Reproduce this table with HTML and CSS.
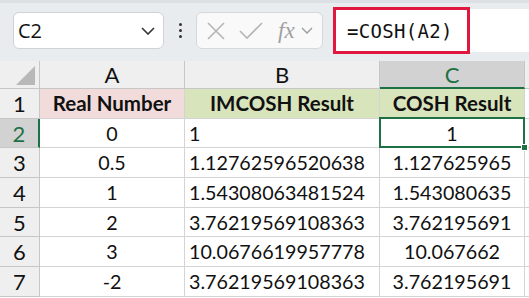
FILE: index.html
```html
<!DOCTYPE html>
<html>
<head>
<meta charset="utf-8">
<link rel="stylesheet" href="styles.css">
</head>
<body>
<div class="app">
  <div class="toolbar">
    <div class="namebox">
      <span class="name">C2</span>
      <svg class="chev" width="14" height="8" viewBox="0 0 14 8"><path d="M1 1 L7 7 L13 1" fill="none" stroke="#333" stroke-width="1.6"/></svg>
    </div>
    <div class="dots"><i></i><i></i><i></i></div>
    <div class="fxbox">
      <svg width="20" height="20" viewBox="0 0 20 20"><path d="M2 2 L18 18 M18 2 L2 18" stroke="#b5b5b5" stroke-width="1.6"/></svg>
      <svg width="24" height="18" viewBox="0 0 24 18"><path d="M1 9 L8 16 L23 1" fill="none" stroke="#b5b5b5" stroke-width="1.6"/></svg>
      <span class="fx">fx</span>
      <svg width="12" height="7" viewBox="0 0 12 7"><path d="M1 1 L6 6 L11 1" fill="none" stroke="#9a9a9a" stroke-width="1.3"/></svg>
    </div>
    <div class="formula">
      <div class="highlight">=COSH(A2)</div>
    </div>
  </div>
  <div class="sheet">
    <div class="corner"><div class="tri"></div></div>
    <div class="colhdr">A</div>
    <div class="colhdr">B</div>
    <div class="colhdr sel">C</div>
    <div class="colhdr extra"></div>

    <div class="rowhdr">1</div>
    <div class="cell center bold pink">Real Number</div>
    <div class="cell center bold green">IMCOSH Result</div>
    <div class="cell center bold green">COSH Result</div>
    <div class="cell extra"></div>

    <div class="rowhdr sel">2</div>
    <div class="cell center">0</div>
    <div class="cell left">1</div>
    <div class="cell center active">1<span class="selbox"><span class="handle"></span></span></div>
    <div class="cell extra"></div>

    <div class="rowhdr">3</div>
    <div class="cell center">0.5</div>
    <div class="cell left">1.12762596520638</div>
    <div class="cell center">1.127625965</div>
    <div class="cell extra"></div>

    <div class="rowhdr">4</div>
    <div class="cell center">1</div>
    <div class="cell left">1.54308063481524</div>
    <div class="cell center">1.543080635</div>
    <div class="cell extra"></div>

    <div class="rowhdr">5</div>
    <div class="cell center">2</div>
    <div class="cell left">3.76219569108363</div>
    <div class="cell center">3.762195691</div>
    <div class="cell extra"></div>

    <div class="rowhdr">6</div>
    <div class="cell center">3</div>
    <div class="cell left">10.0676619957778</div>
    <div class="cell center">10.067662</div>
    <div class="cell extra"></div>

    <div class="rowhdr">7</div>
    <div class="cell center">-2</div>
    <div class="cell left">3.76219569108363</div>
    <div class="cell center">3.762195691</div>
    <div class="cell extra"></div>
  </div>
</div>
</body>
</html>
```

FILE: styles.css
```css
* { box-sizing: border-box; }
html, body { margin: 0; padding: 0; }
body {
  width: 529px;
  height: 298px;
  overflow: hidden;
  background: #ffffff;
  font-family: "Lato", "Noto Sans", sans-serif;
}
.app { width: 529px; }

.toolbar {
  height: 61px;
  background: #e9ecef;
  border-top: 3px solid #dcdfe3;
  display: flex;
  align-items: center;
  padding-left: 13px;
}
.namebox {
  width: 151px;
  height: 37px;
  margin-top: -3px;
  background: #fff;
  border: 1px solid #cfd2d6;
  border-radius: 6px;
  display: flex;
  align-items: center;
  justify-content: space-between;
  padding: 0 8px 0 4px;
}
.name {
  font-family: "Open Sans", "Noto Sans", sans-serif;
  font-size: 20px;
  color: #111;
}
.dots {
  width: 32px;
  display: flex;
  flex-direction: column;
  align-items: center;
  gap: 3px;
  margin-top: -3px;
}
.dots i {
  display: block;
  width: 3px;
  height: 3px;
  background: #333;
  border-radius: 50%;
}
.fxbox {
  width: 127px;
  height: 37px;
  margin-top: -3px;
  background: #f9f9fa;
  border: 1px solid #d6d9dc;
  border-radius: 6px;
  display: flex;
  align-items: center;
  padding-left: 9px;
  gap: 13px;
}
.fx {
  font-family: "Liberation Serif", serif;
  font-style: italic;
  font-size: 23px;
  color: #a0a0a0;
  margin-left: 2px;
  margin-right: -7px;
}
.formula {
  flex: 1;
  height: 43px;
  margin-left: 10px;
  margin-top: -3px;
  background: #fff;
  display: flex;
  align-items: center;
}
.highlight {
  width: 137px;
  height: 47px;
  border: 3px solid #e0173f;
  display: flex;
  align-items: center;
  padding-left: 11px;
  font-family: "DejaVu Sans Mono", monospace;
  font-size: 19px;
  letter-spacing: 0.3px;
  color: #111;
}

.sheet {
  display: grid;
  grid-template-columns: 40px 145px 195px 145px 4px;
  grid-template-rows: 28px repeat(7, 29.7px);
}
.corner, .colhdr, .rowhdr {
  background: #efefef;
  border-right: 1px solid #c6c6c6;
  border-bottom: 1px solid #c6c6c6;
  font-size: 22px;
  color: #111;
  display: flex;
  align-items: center;
  justify-content: center;
}
.corner { position: relative; }
.tri {
  position: absolute;
  right: 4px;
  bottom: 3px;
  width: 0;
  height: 0;
  border-left: 19px solid transparent;
  border-bottom: 19px solid #b8b8b8;
}
.colhdr.sel {
  background: #d2d2d2;
  color: #1e7145;
  border-bottom: 2px solid #1e7145;
}
.colhdr.extra { border-right: none; }
.rowhdr.sel {
  background: #d2d2d2;
  color: #1e7145;
  border-right: 2px solid #1e7145;
}
.cell {
  border-right: 1px solid #d4d4d4;
  border-bottom: 1px solid #d4d4d4;
  font-size: 19.7px;
  color: #111;
  display: flex;
  align-items: center;
  white-space: nowrap;
  overflow: visible;
}
.cell.extra { border-right: none; }
.center { justify-content: center; }
.left { justify-content: flex-start; padding-left: 4px; }
.bold { font-weight: 700; font-size: 20.5px; }
.pink { background: #f2dcdb; }
.green { background: #d8e4bc; }
.active { position: relative; }
.selbox {
  position: absolute;
  left: -1px;
  top: -2px;
  right: -1px;
  bottom: -1px;
  border: 2px solid #1e7145;
}
.handle {
  position: absolute;
  right: -5px;
  bottom: -5px;
  width: 7px;
  height: 7px;
  background: #1e7145;
  border: 1px solid #fff;
}
```
